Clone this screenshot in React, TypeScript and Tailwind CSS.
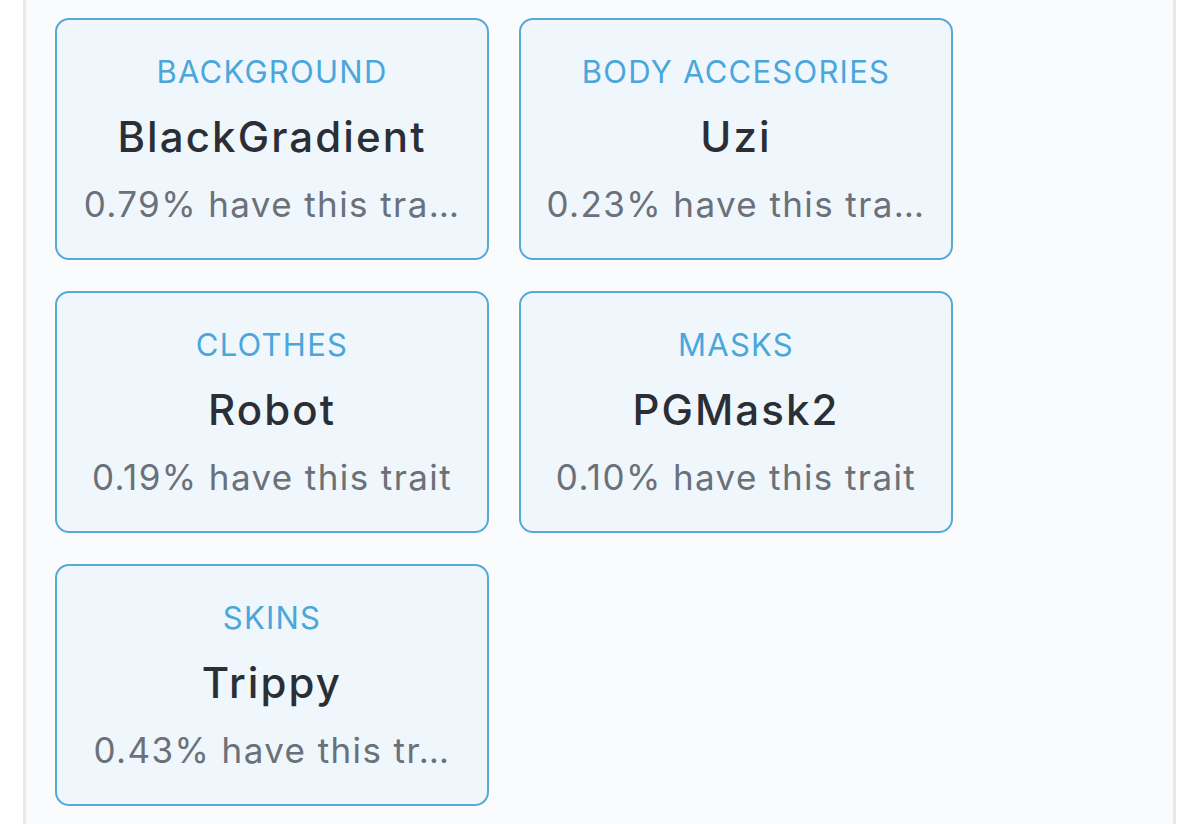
const traits = [
    { type: 'BACKGROUND', value: 'BlackGradient', pct: '0.79% have this tra…' },
    { type: 'BODY ACCESORIES', value: 'Uzi', pct: '0.23% have this tra…' },
    { type: 'CLOTHES', value: 'Robot', pct: '0.19% have this trait' },
    { type: 'MASKS', value: 'PGMask2', pct: '0.10% have this trait' },
    { type: 'SKINS', value: 'Trippy', pct: '0.43% have this tr…' },
];

const TraitCard = ({ type, value, pct }: { type: string; value: string; pct: string }) => (
    <div className="h-[242px] rounded-[14px] border-2 border-[#58a9d7] bg-[#eff7fc] flex flex-col items-center justify-center px-[20px] text-center">
        <div className="text-[31px] leading-[40px] tracking-[0.04em] text-[#4ba6db]">{type}</div>
        <div className="text-[42px] leading-[54px] tracking-[0.05em] mt-[18px] text-[#2b2f35] font-medium">{value}</div>
        <div className="text-[35px] leading-[46px] tracking-[0.04em] mt-[17px] text-[#6b7079] whitespace-nowrap">{pct}</div>
    </div>
);

const App = () => {
    return (
        <div className="w-[1200px] h-[824px] bg-white overflow-hidden" style={{ fontFamily: 'Inter, "Noto Sans", sans-serif' }}>
            <div className="ml-[23px] w-[1153px] h-full border-x-[3px] border-[#e6e8eb] bg-[#fafbfc] pl-[29px] pt-[18px]">
                <div className="grid grid-cols-[434px_434px] gap-x-[30px] gap-y-[31px]">
                    {traits.map((t) => (
                        <TraitCard key={t.type} {...t} />
                    ))}
                </div>
            </div>
        </div>
    );
};

export default App;
